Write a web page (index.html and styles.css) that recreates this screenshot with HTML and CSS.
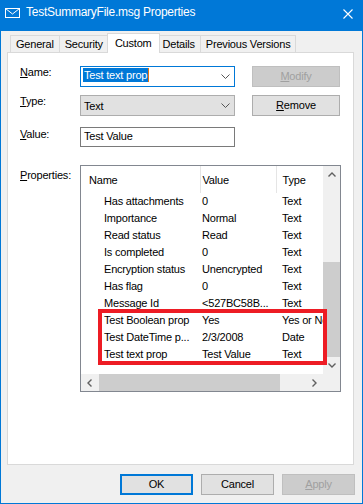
FILE: index.html
```html
<html>
	<head>
		<title>TestSummaryFile.msg Properties</title>
		<link rel="stylesheet" href="styles.css">
	</head>
	<body>
		<div id="window">
			<div class="titlebar">
				<svg class="mail-icon" width="16" height="10" viewBox="0 0 16 10">
					<rect x="0.5" y="0.5" width="14" height="9" fill="none" stroke="#fff" />
					<polyline points="0.5,0.5 7.5,6 14.5,0.5" fill="none" stroke="#fff" />
				</svg>
				<span class="title">TestSummaryFile.msg Properties</span>
				<svg class="close" width="10" height="10" viewBox="0 0 10 10">
					<path d="M0.5 0.5 L9.5 9.5 M9.5 0.5 L0.5 9.5" stroke="#fff" stroke-width="1.1" />
				</svg>
			</div>
			<div class="client">
				<div class="tabs">
					<div class="tab">General</div>
					<div class="tab">Security</div>
					<div class="tab active">Custom</div>
					<div class="tab">Details</div>
					<div class="tab">Previous Versions</div>
				</div>
				<div class="panel">
					<div class="field name-row">
						<label><u>N</u>ame:</label>
						<div class="combo focused">
							<span class="selected">Test text prop</span><span class="caret"></span>
							<svg class="chevron" width="9" height="5" viewBox="0 0 9 5"><polyline points="0.5,0.5 4.5,4.5 8.5,0.5" fill="none" stroke="#555" /></svg>
						</div>
						<button class="btn" disabled><u>M</u>odify</button>
					</div>
					<div class="field type-row">
						<label><u>T</u>ype:</label>
						<div class="combo list">
							<span>Text</span>
							<svg class="chevron" width="9" height="5" viewBox="0 0 9 5"><polyline points="0.5,0.5 4.5,4.5 8.5,0.5" fill="none" stroke="#555" /></svg>
						</div>
						<button class="btn"><u>R</u>emove</button>
					</div>
					<div class="field value-row">
						<label><u>V</u>alue:</label>
						<div class="textbox">Test Value</div>
					</div>
					<div class="field props-row">
						<label><u>P</u>roperties:</label>
						<div class="listview">
							<div class="list-content">
								<table>
									<colgroup><col class="c-name"><col class="c-value"><col class="c-type"></colgroup>
									<thead>
										<tr><th class="h-name">Name</th><th class="h-value">Value</th><th class="h-type">Type</th></tr>
									</thead>
									<tbody>
										<tr><td>Has attachments</td><td>0</td><td>Text</td></tr>
										<tr><td>Importance</td><td>Normal</td><td>Text</td></tr>
										<tr><td>Read status</td><td>Read</td><td>Text</td></tr>
										<tr><td>Is completed</td><td>0</td><td>Text</td></tr>
										<tr><td>Encryption status</td><td>Unencrypted</td><td>Text</td></tr>
										<tr><td>Has flag</td><td>0</td><td>Text</td></tr>
										<tr><td>Message Id</td><td>&lt;527BC58B...</td><td>Text</td></tr>
										<tr><td>Test Boolean prop</td><td>Yes</td><td>Yes or No</td></tr>
										<tr><td>Test DateTime p...</td><td>2/3/2008</td><td>Date</td></tr>
										<tr><td>Test text prop</td><td>Test Value</td><td>Text</td></tr>
									</tbody>
								</table>
							</div>
							<div class="vscroll">
								<div class="arrow"><svg width="8" height="5" viewBox="0 0 8 5"><polyline points="0.5,4.5 4,1 7.5,4.5" fill="none" stroke="#606060" stroke-width="1.4" /></svg></div>
								<div class="track"><div class="thumb"></div></div>
								<div class="arrow"><svg width="8" height="5" viewBox="0 0 8 5"><polyline points="0.5,0.5 4,4 7.5,0.5" fill="none" stroke="#606060" stroke-width="1.4" /></svg></div>
							</div>
							<div class="hscroll">
								<div class="arrow"><svg width="5" height="8" viewBox="0 0 5 8"><polyline points="4.5,0.5 1,4 4.5,7.5" fill="none" stroke="#606060" stroke-width="1.4" /></svg></div>
								<div class="track"><div class="thumb"></div></div>
								<div class="arrow"><svg width="5" height="8" viewBox="0 0 5 8"><polyline points="0.5,0.5 4,4 0.5,7.5" fill="none" stroke="#606060" stroke-width="1.4" /></svg></div>
							</div>
							<div class="corner"></div>
							<div class="highlight"></div>
						</div>
					</div>
				</div>
				<div class="footer">
					<button class="btn default">OK</button>
					<button class="btn">Cancel</button>
					<button class="btn" disabled><u>A</u>pply</button>
				</div>
			</div>
		</div>
	</body>
</html>
```

FILE: styles.css
```css
body {
	margin: 0;
	font: 11px/13px "Liberation Sans", Arial, sans-serif;
	letter-spacing: -0.2px;
	color: #000;
}
#window {
	width: 363px;
	height: 504px;
	display: flex;
	flex-direction: column;
	background: #f0f0f0;
}
.titlebar {
	height: 31px;
	flex: none;
	box-sizing: border-box;
	background: #0078d7;
	color: #fff;
	display: flex;
	align-items: flex-start;
	padding: 5px 0 0 5px;
	font-size: 12px;
	line-height: 14px;
	letter-spacing: -0.25px;
}
.mail-icon {
	margin-top: 3px;
	margin-right: 5px;
}
.title {
	flex: 1;
}
.close {
	margin: 4px 10px 0 0;
}
.client {
	flex: 1;
	display: flex;
	flex-direction: column;
	border: 1px solid #0078d7;
	border-top: 0;
}
.tabs {
	display: flex;
	align-items: flex-start;
	height: 22px;
	box-sizing: border-box;
	padding: 2px 0 0 3px;
	margin: 0 0 -1px 6px;
}
.tab {
	height: 17px;
	box-sizing: border-box;
	margin-top: 2px;
	margin-left: -1px;
	padding: 2px 5px 0;
	border: 1px solid #d9d9d9;
	border-bottom: 0;
	background: #f0f0f0;
	white-space: nowrap;
}
.tab:first-child {
	margin-left: 0;
}
.tab.active {
	height: 20px;
	margin: 0 -2px 0 -2px;
	padding: 3px 7px 0;
	background: #fff;
	position: relative;
	z-index: 1;
}
.panel {
	height: 413px;
	flex: none;
	box-sizing: border-box;
	margin: 0 8px 0 6px;
	border: 1px solid #d9d9d9;
	background: #fff;
	padding: 13px 0 0 12px;
}
.field {
	display: flex;
	align-items: flex-start;
}
.field label {
	width: 60px;
	flex: none;
}
.type-row {
	margin-top: 8px;
}
.value-row {
	margin-top: 11px;
}
.props-row {
	margin-top: 18px;
}
.value-row label {
	padding-top: 1px;
}
.props-row label {
	padding-top: 4px;
}
.combo {
	width: 155px;
	height: 21px;
	box-sizing: border-box;
	border: 1px solid #adadad;
	display: flex;
	align-items: flex-start;
	padding: 1px 0 0 2px;
	line-height: 14px;
	position: relative;
}
.combo.focused {
	border-color: #0078d7;
	background: #fff;
}
.combo.list {
	background: #e1e1e1;
	padding: 3px 0 0 3px;
}
.selected {
	background: #0078d7;
	color: #fff;
	padding: 0 1px;
}
.caret {
	width: 1px;
	height: 14px;
	background: #e8730c;
}
.chevron {
	margin: 6px 4px 0 auto;
}
.combo.list .chevron {
	margin-top: 4px;
}
.textbox {
	width: 155px;
	height: 20px;
	box-sizing: border-box;
	border: 1px solid #7a7a7a;
	padding: 1px 0 0 3px;
	line-height: 14px;
}
.btn {
	font: inherit;
	letter-spacing: inherit;
	color: #000;
	width: 88px;
	height: 21px;
	margin-left: 17px;
	padding: 0;
	border: 1px solid #adadad;
	background: #e1e1e1;
	border-radius: 0;
}
.btn:disabled {
	background: #cccccc;
	border-color: #bfbfbf;
	color: #a0a0a0;
}
.listview {
	width: 261px;
	height: 227px;
	box-sizing: border-box;
	border: 1px solid #828790;
	display: grid;
	grid-template-columns: 242px 17px;
	grid-template-rows: 208px 17px;
	position: relative;
}
.list-content {
	overflow: hidden;
}
table {
	font: inherit;
	letter-spacing: inherit;
	border-collapse: collapse;
	table-layout: fixed;
	width: 280px;
}
.c-name {
	width: 119px;
}
.c-value {
	width: 76px;
}
.c-type {
	width: 85px;
}
th {
	font-weight: normal;
	text-align: left;
	height: 27px;
	box-sizing: border-box;
	padding: 1px 0 0;
	line-height: 26px;
}
th.h-name {
	padding-left: 8px;
	border-right: 1px solid #e5e5e5;
}
th.h-value {
	padding-left: 2px;
	border-right: 1px solid #e5e5e5;
}
th.h-type {
	padding-left: 6px;
}
td {
	height: 17px;
	padding: 0;
	line-height: 17px;
	white-space: nowrap;
	overflow: hidden;
}
td:nth-child(1) {
	padding-left: 23px;
}
td:nth-child(2) {
	padding-left: 2px;
}
td:nth-child(3) {
	padding-left: 6px;
}
.vscroll, .hscroll {
	background: #f0f0f0;
	display: flex;
}
.vscroll {
	flex-direction: column;
}
.arrow {
	width: 17px;
	height: 17px;
	flex: none;
	display: flex;
	align-items: center;
	justify-content: center;
}
.track {
	flex: 1;
	display: flex;
}
.vscroll .track {
	flex-direction: column;
}
.vscroll .thumb {
	margin: auto 0 0 0;
	width: 17px;
	height: 95px;
	background: #cdcdcd;
}
.hscroll .thumb {
	margin-left: 1px;
	width: 181px;
	height: 17px;
	background: #cdcdcd;
}
.corner {
	background: #f0f0f0;
}
.highlight {
	position: absolute;
	left: 17px;
	top: 143px;
	width: 229px;
	height: 56px;
	box-sizing: border-box;
	border: 4px solid #ed1c24;
}
.footer {
	flex: 1;
	display: flex;
	justify-content: flex-end;
	align-items: flex-start;
	gap: 8px;
	padding: 9px 7px 0 0;
}
.footer .btn {
	width: 73px;
	margin: 0;
}
.footer .btn.default {
	border: 2px solid #0078d7;
}
```
